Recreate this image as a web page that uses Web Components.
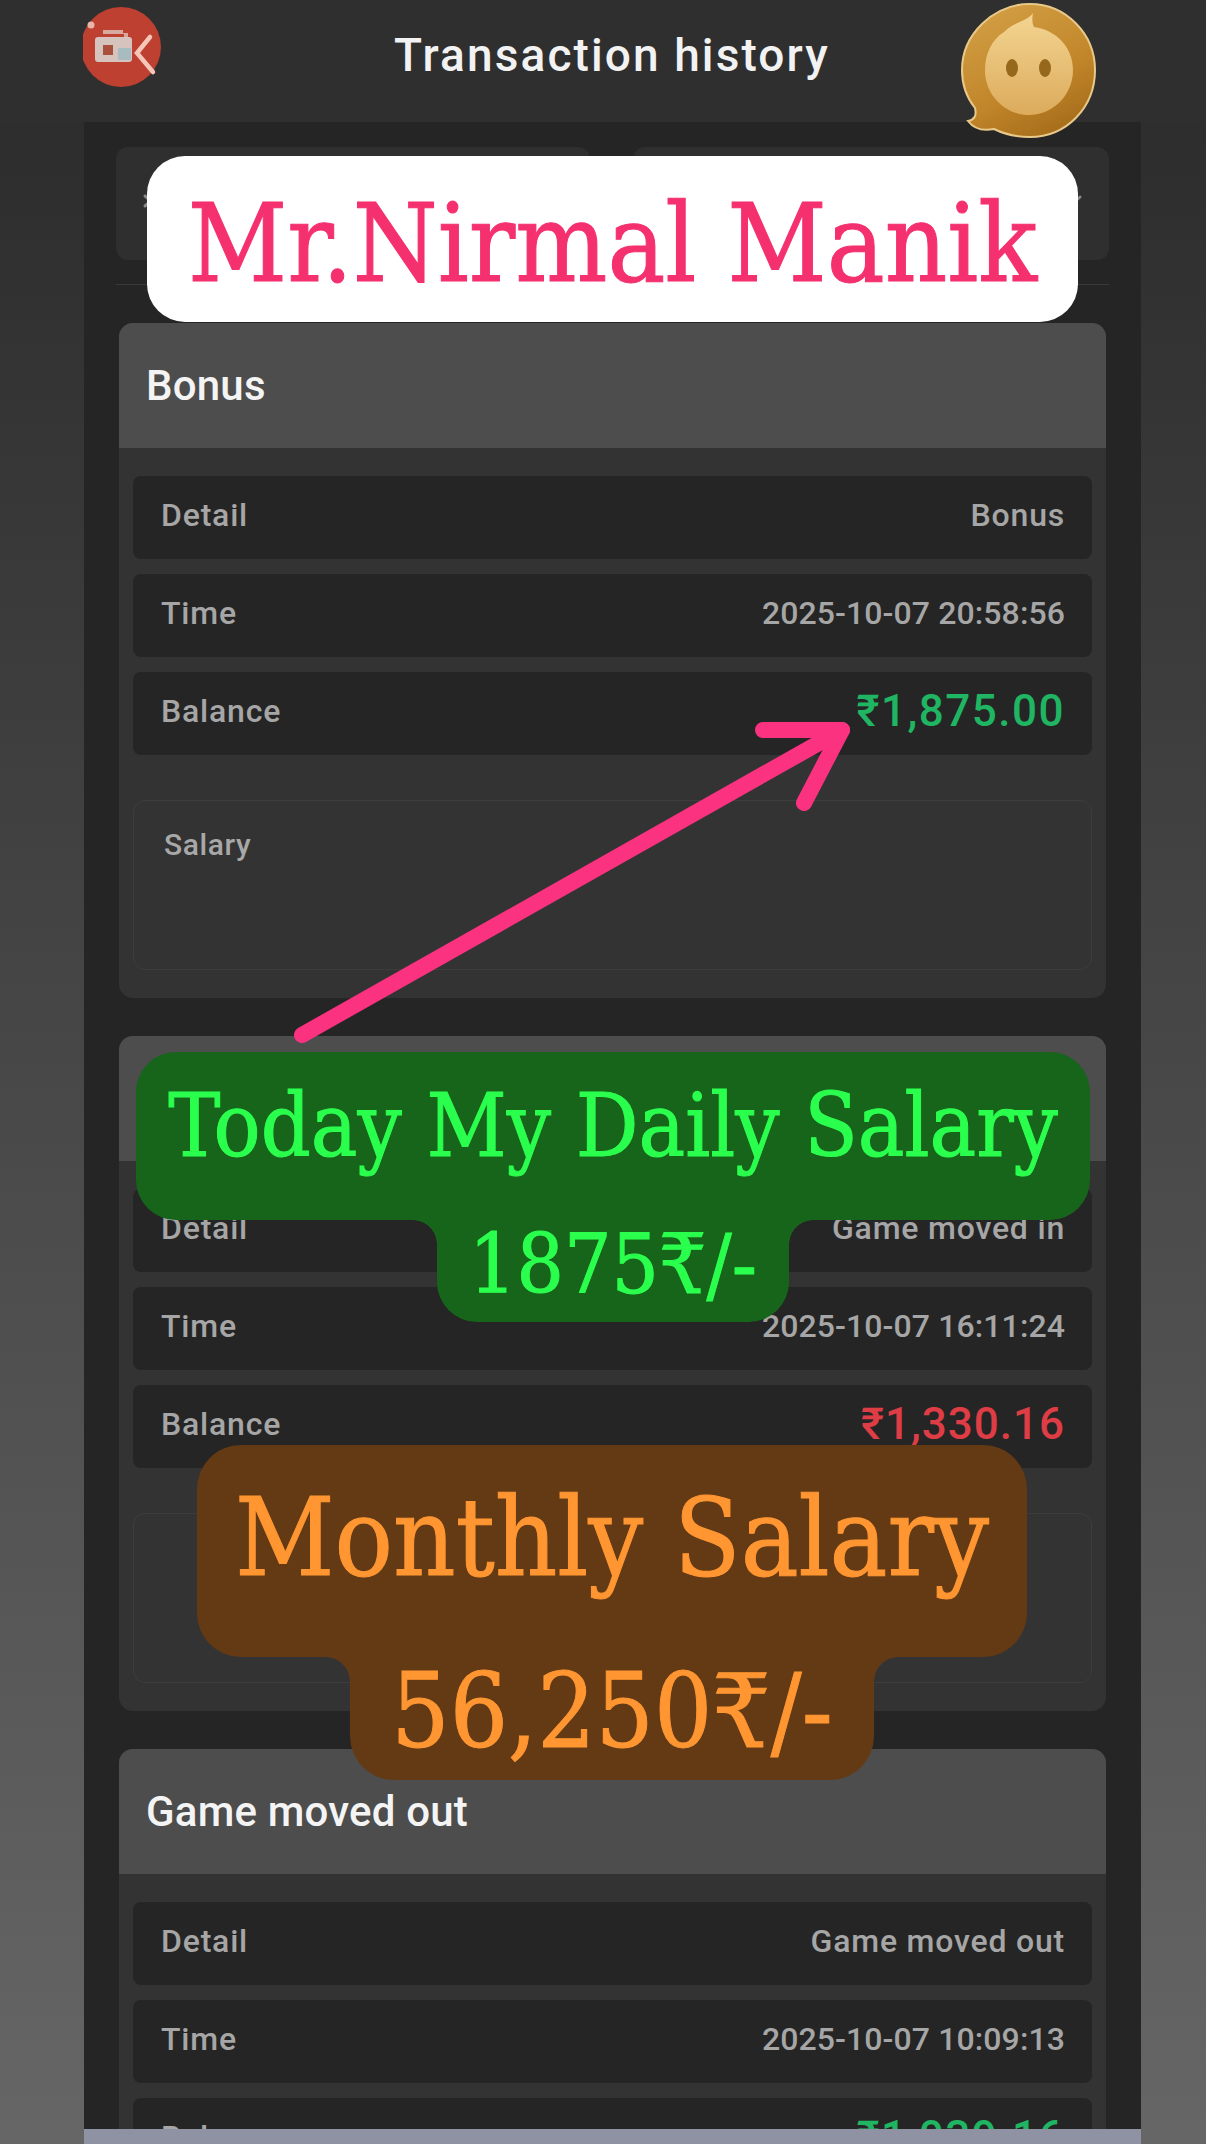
<!DOCTYPE html>
<html lang="en">
<head>
<meta charset="utf-8">
<title>Transaction history</title>
<style>
    html, body {
        margin: 0;
        height: 2144px;
        overflow: hidden;
    }
    body {
        background: linear-gradient(#2c2c2c 0, #2f2f2f 200px, #666666 2144px);
        font-family: 'Roboto', 'Liberation Sans', sans-serif;
    }
</style>
</head>
<body>
<history-page>
    <app-bar slot="bar">Transaction history</app-bar>
    <filter-row></filter-row>
    <tx-card title="Bonus" detail="Bonus" time="2025-10-07 20:58:56" balance="₹1,875.00" memo="Salary"></tx-card>
    <tx-card detail="Game moved in" time="2025-10-07 16:11:24" balance="₹1,330.16" kind="out"></tx-card>
    <tx-card title="Game moved out" detail="Game moved out" time="2025-10-07 10:09:13" balance="₹1,039.16"></tx-card>
</history-page>

<sticker-label style="left:147px;top:156px;--w:931px;--h:166px;--bg:#ffffff;--fg:#f5306e;--size:108px;--size2:108px;--r:38px;--pad:0px;--padt:8px">Mr.Nirmal Manik</sticker-label>

<pointer-arrow></pointer-arrow>

<sticker-label style="left:136px;top:1052px;--w:954px;--h:168px;--bg:#17641b;--fg:#2bff4e;--size:87px;--size2:83px;--r:40px;--pad:20px;--padt:0px;--lift:14px" second="1875₹/-" data-w2="352" data-h2="102">Today My Daily Salary</sticker-label>

<sticker-label style="left:197px;top:1445px;--w:830px;--h:212px;--bg:#643a14;--fg:#ff9632;--size:108px;--size2:102px;--r:44px;--pad:28px;--padt:0px;--lift:14px" second="56,250₹/-" data-w2="524" data-h2="123">Monthly Salary</sticker-label>

<script>
/**
 * Page frame: top bar, dark centre column and the strip at the bottom edge.
 */
customElements.define('history-page', class extends HTMLElement {
    constructor () {
        super()
        this.attachShadow({ mode: 'open' }).innerHTML = `
<style>
    :host { display: block; height: 2144px; overflow: hidden; position: relative; }
    .column {
        margin: 0 65px 0 84px;
        height: 2022px;
        background: #252525;
        padding: 25px 35px 0;
        display: flex;
        flex-direction: column;
        overflow: hidden;
    }
    .strip {
        position: absolute;
        left: 84px;
        right: 65px;
        bottom: 0;
        height: 15px;
        background: #8e92a2;
    }
</style>
<slot name="bar"></slot>
<div class="column"><slot></slot></div>
<div class="strip"></div>`
    }
})

customElements.define('app-bar', class extends HTMLElement {
    constructor () {
        super()
        this.attachShadow({ mode: 'open' }).innerHTML = `
<style>
    :host {
        display: flex;
        height: 122px;
        align-items: flex-start;
        justify-content: center;
        position: relative;
        background: #2f2f2f;
        color: #f2f2f2;
        font-size: 46px;
        font-weight: 500;
        letter-spacing: 2.1px;
    }
    .title { margin-top: 28px; line-height: 54px; padding-left: 18px; }
    .rec { position: absolute; left: 82px; top: 3px; }
    .coin { position: absolute; left: 960px; top: 3px; }
</style>
<svg class="rec" width="80" height="90" viewBox="0 0 80 90">
    <defs><clipPath id="cut"><rect x="1" y="0" width="80" height="90"/></clipPath></defs>
    <circle cx="39" cy="44" r="40" fill="#bd4030" clip-path="url(#cut)"/>
    <circle cx="9" cy="22" r="3.5" fill="#e8b5a8"/>
    <path d="M21 27h20v3h5v9h-4v-8h-21z" fill="#d8a99f"/>
    <rect x="13" y="34" width="37" height="25" rx="3" fill="#d6c3bd"/>
    <rect x="21" y="42" width="10" height="10" fill="#a9503c"/>
    <rect x="36" y="45" width="13" height="12" fill="#a8bcc0"/>
    <path d="M68 34 L55 50 L71 69" fill="none" stroke="#f6c6b8" stroke-width="4.5" stroke-linecap="round"/>
</svg>
<span class="title"><slot></slot></span>
<svg class="coin" width="140" height="140" viewBox="0 0 140 140">
    <defs>
        <linearGradient id="rim" x1="0.2" y1="0" x2="0.7" y2="1">
            <stop offset="0" stop-color="#d29f45"/>
            <stop offset="0.6" stop-color="#c2862a"/>
            <stop offset="1" stop-color="#a56c1a"/>
        </linearGradient>
        <linearGradient id="face" x1="0.5" y1="0" x2="0.5" y2="1">
            <stop offset="0" stop-color="#f3d592"/>
            <stop offset="1" stop-color="#dcab5c"/>
        </linearGradient>
    </defs>
    <path d="M70 1 C106 1 135 31 135 67 C135 105 106 134 70 134 C56 134 44 131 34 126 C24 128 14 126 8 118 C14 117 17 113 15 105 C7 95 2 82 2 67 C2 31 34 1 70 1Z" fill="url(#rim)" stroke="#e8c98a" stroke-width="2"/>
    <path d="M73 10 C68 18 54 19 44 29 C31 37 25 52 25 67 C25 93 46 112 69 112 C93 112 113 92 113 67 C113 44 96 27 74 24 C72 20 72 15 73 10Z" fill="url(#face)"/>
    <ellipse cx="52" cy="65" rx="6" ry="9" fill="#96681c"/>
    <ellipse cx="85" cy="65" rx="6" ry="9" fill="#96681c"/>
</svg>`
    }
})

customElements.define('filter-row', class extends HTMLElement {
    constructor () {
        super()
        this.attachShadow({ mode: 'open' }).innerHTML = `
<style>
    :host {
        display: grid;
        grid-template-columns: 474px 476px;
        justify-content: space-between;
        height: 138px;
        padding-bottom: 24px;
        border-bottom: 1px solid #3a3a3a;
        margin: 0 -3px 38px;
    }
    div {
        height: 113px;
        background: #2f2f2f;
        border-radius: 12px;
        display: flex;
        align-items: center;
        padding: 0 26px 6px;
        box-sizing: border-box;
    }
    div:first-child { padding: 16px 0 0 20px; }
    div:last-child { justify-content: flex-end; }
    svg { fill: none; stroke: #8a8a8a; stroke-width: 3; stroke-linecap: round; }
</style>
<div><svg width="14" height="16" viewBox="0 0 14 16"><path d="M3 3 L9 8 L3 13"/></svg></div>
<div><svg width="24" height="16" viewBox="0 0 24 16"><path d="M3 4 L12 12 L21 4"/></svg></div>`
    }
})

/**
 * One transaction: a grey header, three rows and a memo box.
 */
customElements.define('tx-card', class extends HTMLElement {
    constructor () {
        super()
        const out = this.getAttribute('kind') === 'out'
        this.attachShadow({ mode: 'open' }).innerHTML = `
<style>
    :host {
        display: block;
        background: #333333;
        border-radius: 14px;
        overflow: hidden;
        margin-bottom: 38px;
        flex: none;
    }
    h2 {
        margin: 0;
        height: 125px;
        background: #4d4d4d;
        color: #f4f4f4;
        font-size: 42px;
        font-weight: 500;
        line-height: 125px;
        padding-left: 27px;
        letter-spacing: 0.2px;
    }
    .body { padding: 28px 14px 28px; display: flex; flex-direction: column; gap: 15px; }
    .memo {
        margin-top: 30px;
        height: 170px;
        border: 1px solid #3d3d3d;
        border-radius: 12px;
        color: #a8a8a8;
        font-size: 30px;
        font-weight: 500;
        padding: 26px 30px;
        box-sizing: border-box;
        letter-spacing: 0.6px;
    }
</style>
<h2>${this.getAttribute('title') || ''}</h2>
<div class="body">
    <tx-row label="Detail" value="${this.getAttribute('detail')}"></tx-row>
    <tx-row label="Time" value="${this.getAttribute('time')}" tone="time"></tx-row>
    <tx-row label="Balance" value="${this.getAttribute('balance')}" tone="${out ? 'loss' : 'gain'}"></tx-row>
    <div class="memo">${this.getAttribute('memo') || ''}</div>
</div>`
    }
})

customElements.define('tx-row', class extends HTMLElement {
    constructor () {
        super()
        const tone = this.getAttribute('tone')
        this.attachShadow({ mode: 'open' }).innerHTML = `
<style>
    :host {
        display: flex;
        height: 83px;
        box-sizing: border-box;
        align-items: center;
        justify-content: space-between;
        padding: 0 27px 5px 28px;
        background: #252525;
        border-radius: 8px;
        color: #a6a6a6;
        font-size: 32px;
        font-weight: 500;
        letter-spacing: 0.8px;
    }
    .time { letter-spacing: 0.1px; }
    .gain { color: #1fb562; font-size: 44px; letter-spacing: 1.5px; }
    .loss { color: #df3d45; font-size: 44px; letter-spacing: 1px; }
</style>
<span>${this.getAttribute('label')}</span>
<span class="${tone || ''}">${this.getAttribute('value')}</span>`
    }
})

/**
 * Text label pasted over the screenshot, with an optional narrower second line.
 */
customElements.define('sticker-label', class extends HTMLElement {
    constructor () {
        super()
        const second = this.getAttribute('second')
        const w2 = this.dataset.w2
        const h2 = this.dataset.h2
        this.attachShadow({ mode: 'open' }).innerHTML = `
<style>
    :host {
        position: absolute;
        display: flex;
        flex-direction: column;
        align-items: center;
        width: var(--w);
        font-family: 'DejaVu Serif Condensed', 'DejaVu Serif', serif;
        font-size: var(--size);
        color: var(--fg);
        -webkit-text-stroke: 1px var(--fg);
        white-space: nowrap;
    }
    .line {
        display: flex;
        align-items: center;
        justify-content: center;
        background: var(--bg);
        border-radius: var(--r);
    }
    .first { width: 100%; height: var(--h); padding: var(--padt) 0 var(--pad); box-sizing: border-box; }
    .second {
        position: relative;
        font-size: var(--size2);
        padding-bottom: var(--lift);
        box-sizing: border-box;
        border-top-left-radius: 0;
        border-top-right-radius: 0;
    }
    .second::before, .second::after {
        content: '';
        position: absolute;
        top: 0;
        width: 24px;
        height: 24px;
    }
    .second::before {
        left: -24px;
        background: radial-gradient(circle at 0 100%, transparent 23.5px, var(--bg) 24px);
    }
    .second::after {
        right: -24px;
        background: radial-gradient(circle at 100% 100%, transparent 23.5px, var(--bg) 24px);
    }
</style>
<div class="line first"><slot></slot></div>
${second ? `<div class="line second" style="width:${w2}px;height:${h2}px">${second}</div>` : ''}`
    }
})

customElements.define('pointer-arrow', class extends HTMLElement {
    constructor () {
        super()
        this.attachShadow({ mode: 'open' }).innerHTML = `
<style>
    :host { position: absolute; left: 280px; top: 700px; display: block; }
</style>
<svg width="600" height="360" viewBox="0 0 600 360" fill="none" stroke="#fb3280" stroke-width="16" stroke-linecap="round" stroke-linejoin="round">
    <path d="M22 335 L562 30"/>
    <path d="M483 30 L562 30 L524 103"/>
</svg>`
    }
})
</script>
</body>
</html>
